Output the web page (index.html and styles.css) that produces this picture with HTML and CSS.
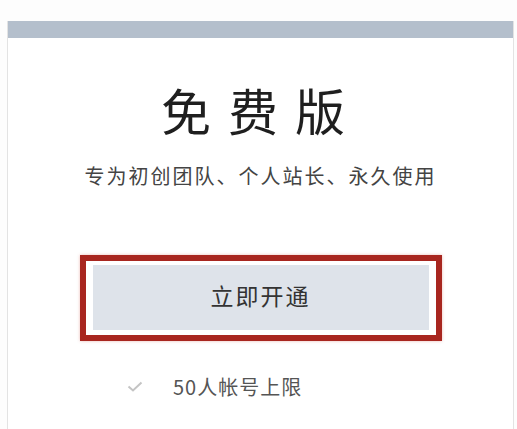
FILE: index.html
```html
<!DOCTYPE html>
<html lang="zh-CN">
<head>
    <meta charset="UTF-8">
    <meta name="viewport" content="width=device-width, initial-scale=1.0">
    <title>免费版</title>
    <link rel="stylesheet" href="styles.css">
</head>
<body>
    <div class="card">
        <div class="card-bar"></div>
        <h2 class="plan-name">免费版</h2>
        <p class="plan-desc">专为初创团队、个人站长、永久使用</p>

        <!-- highlighted button -->
        <div class="highlight">
            <button class="open-btn">立即开通</button>
        </div>

        <ul class="features">
            <li>
                <svg class="check" width="16" height="11" viewBox="0 0 16 11">
                    <polyline points="1.5,5.5 6,9.5 14.5,1.5" fill="none" stroke="#c4c4c4" stroke-width="2"/>
                </svg>
                <span>50人帐号上限</span>
            </li>
        </ul>
    </div>
</body>
</html>
```

FILE: styles.css
```css
body {
    font-family: "Noto Sans CJK SC", "Noto Sans", sans-serif;
    background-color: #fdfdfd;
    margin: 0;
    padding: 21px 3px 0 7px;
    height: 429px;
    box-sizing: border-box;
    overflow: hidden;
}

.card {
    background-color: #fff;
    border-left: 1px solid #e3e3e3;
    border-right: 1px solid #e3e3e3;
    width: 507px;
    box-sizing: border-box;
    height: 420px;
    text-align: center;
}

.card-bar {
    height: 17px;
    background-color: #b4bfcc;
}

.plan-name {
    margin: 40px 0 0;
    font-size: 50px;
    line-height: 62px;
    font-weight: normal;
    letter-spacing: 17px;
    padding-left: 2px;
    color: #1f1f1f;
}

.plan-desc {
    margin: 22px 0 0;
    font-size: 20px;
    line-height: 28px;
    letter-spacing: 2px;
    color: #444;
}

.highlight {
    width: 362px;
    box-sizing: border-box;
    margin: 65px auto 0;
    border: 6px solid #a8261f;
    padding: 4px 7px 5px;
    box-shadow: 0 0 3px rgba(200, 60, 50, 0.35);
    background-color: #fff;
}

.open-btn {
    display: block;
    width: 100%;
    height: 65px;
    padding: 0 0 6px;
    border: none;
    background-color: #dee3ea;
    font-family: inherit;
    font-size: 23px;
    letter-spacing: 2px;
    color: #333;
    cursor: pointer;
}

.features {
    list-style: none;
    margin: 31px 0 0;
    padding: 0 0 0 119px;
    text-align: left;
}

.features li {
    display: flex;
    align-items: center;
    height: 28px;
    font-size: 20px;
    letter-spacing: 1px;
    color: #555;
}

.check {
    margin-right: 30px;
}
```
